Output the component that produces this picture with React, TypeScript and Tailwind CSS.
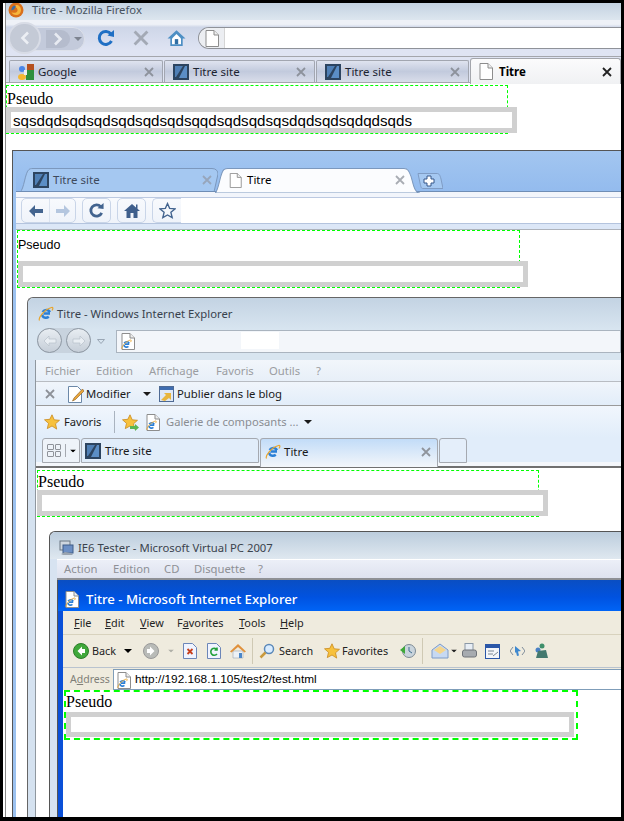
import React from "react";

const sans = "font-['Noto_Sans','Open_Sans',sans-serif]";

// small drawings used in the browser chromes
const PageIcon = ({ className = "w-[14px] h-[17px]" }: { className?: string }) => (
  <svg viewBox="0 0 14 17" className={`shrink-0 ${className}`}>
    <path d="M1 .5h8l4.5 4.5v11.5H1z" fill="#fff" stroke="#8d8d8d" />
    <path d="M9 .5V5h4.5" fill="#eee" stroke="#8d8d8d" />
  </svg>
);

const SiteIcon = () => (
  <svg viewBox="0 0 16 16" className="w-4 h-4 shrink-0">
    <rect width="16" height="16" fill="#2c4460" />
    <path d="M2 2h8L3 13H2z" fill="#4f7fb5" />
    <path d="M12 2h2v12H6z" fill="#5b8ec6" />
  </svg>
);

const GoogleIcon = () => (
  <svg viewBox="0 0 16 16" className="w-4 h-4 shrink-0">
    <rect x="9" width="7" height="7" fill="#b5501f" />
    <rect x="8" y="6" width="8" height="10" fill="#2f8f3c" />
    <circle cx="4" cy="5" r="3" fill="#4a86e8" />
    <ellipse cx="4" cy="13" rx="4" ry="3" fill="#f4b731" />
    <rect x="6" y="6" width="3" height="5" fill="#eee" />
  </svg>
);

const IeIcon = ({ className = "w-4 h-4" }: { className?: string }) => (
  <svg viewBox="0 0 16 16" className={`shrink-0 ${className}`}>
    <path d="M12 7.5H5.5M4.2 8.6c.2 3 4 4.2 6.6 2.1M11.8 6.2C11 3.6 6.6 3 4.6 6" fill="none" stroke="#2a7fd6" strokeWidth="2.4" />
    <path d="M1.5 14.5C0 12 6 3.500 13.5 1.500c2-.5 1.500 1.500.5 3" fill="none" stroke="#e9a52c" strokeWidth="1.200" />
  </svg>
);

const IeDoc = () => (
  <div className="relative w-[14px] h-[17px] shrink-0">
    <PageIcon />
    <div className="absolute left-0 bottom-0">
      <IeIcon className="w-[11px] h-[11px]" />
    </div>
  </div>
);

const FoxIcon = () => (
  <svg viewBox="0 0 16 16" className="w-4 h-4 shrink-0">
    <circle cx="8" cy="8" r="7.500" fill="#d9701c" />
    <path d="M8 3c3 0 5 2 5 5s-2 5-5 5c-2 0-4-1-4.500-3 2 1.500 5 1 6-1 .5-2-1-4-3-4z" fill="#f6b53c" />
    <path d="M6 3.500c-2 1-3 3-2.500 5L6 7.500l2-3z" fill="#3c6ea8" />
  </svg>
);

const Star = ({ className = "w-4 h-4" }: { className?: string }) => (
  <svg viewBox="0 0 16 16" className={`shrink-0 ${className}`}>
    <path d="M8 .8l2.200 5 5.300.5-4 3.500 1.200 5.300L8 12l-4.700 2.600 1.200-5.300-4-3.500 5.300-.5z" fill="#f7c13d" stroke="#c98a1e" strokeWidth=".8" />
  </svg>
);

const Cross = ({ className, size = 10 }: { className: string; size?: number }) => (
  <svg viewBox="0 0 10 10" width={size} height={size} className={`shrink-0 ${className}`}>
    <path d="M1 1l8 8M9 1L1 9" fill="none" stroke="currentColor" strokeWidth="1.800" />
  </svg>
);

const Caret = ({ className = "text-black" }: { className?: string }) => (
  <svg viewBox="0 0 8 4" className={`w-2 h-1 shrink-0 ${className}`}>
    <path d="M0 0h8L4 4z" fill="currentColor" />
  </svg>
);

const RoundArrow = ({ fill, dark, dir = "left" }: { fill: string; dark: string; dir?: "left" | "right" }) => (
  <svg viewBox="0 0 16 16" className="w-4 h-4 shrink-0">
    <circle cx="8" cy="8" r="7.500" fill={fill} stroke={dark} />
    <path d={dir === "left" ? "M9 3.500L4.500 8 9 12.500V10h3V6H9z" : "M7 3.500L11.500 8 7 12.500V10H4V6h3z"} fill="#fff" />
  </svg>
);

const XpDoc = ({ kind }: { kind: "stop" | "refresh" }) => (
  <svg viewBox="0 0 14 16" className="w-[14px] h-4 shrink-0">
    <path d="M.5.500h9l4 4v11H.5z" fill="#f0f4ff" stroke="#6c86b8" />
    {kind === "stop" ? (
      <path d="M4.500 6l5 5M9.500 6l-5 5" stroke="#c8401c" strokeWidth="1.800" />
    ) : (
      <path d="M10 6.500A3.500 3.500 0 1 0 10 11M10 4.500V7H7.500" fill="none" stroke="#23a03c" strokeWidth="1.600" />
    )}
  </svg>
);

const House = ({ className = "w-4 h-4" }: { className?: string }) => (
  <svg viewBox="0 0 16 16" className={`shrink-0 ${className}`}>
    <path d="M8 1L0 8.500h2.500V15h11V8.500H16z" fill="#4d8fc4" />
    <path d="M4 8.500L8 4.500l4 4V13.500H4z" fill="#fff" />
    <rect x="6.500" y="9" width="3" height="4.500" fill="#2f6da3" />
  </svg>
);

const XpHouse = () => (
  <svg viewBox="0 0 16 16" className="ml-[9px] h-4 w-4 shrink-0">
    <path d="M3 8h10v7H3z" fill="#eef2f6" stroke="#9aa6b2" strokeWidth=".6" />
    <path d="M8 1L0 8.500l1.500 1L8 4l6.500 5.500 1.500-1z" fill="#e0913c" />
    <rect x="9" y="10" width="3" height="5" fill="#4a86c8" />
  </svg>
);

type BoxProps = {
  box: string;
  label: string;
  input: string;
  value?: string;
};

// the page under test: same form rendered by each browser
const FormBox = ({ box, label, input, value = "" }: BoxProps) => (
  <div className={box}>
    <div className={label}>Pseudo</div>
    <input
      readOnly
      value={value}
      className={`relative block border-[5px] border-[#d0d0d0] bg-white px-[2px] text-black outline-none ${input}`}
    />
  </div>
);

const Firefox = () => (
  <div className="flex h-full flex-col border-l border-[#8a8a8a] bg-white">
    <div className="flex h-[17px] shrink-0 items-center overflow-hidden bg-gradient-to-b from-[#c3d2e1] to-[#dde6ef] pl-[2px]">
      <div className="-mt-[3px]">
        <FoxIcon />
      </div>
      <span className="mb-[3px] ml-2 text-[11.300px] leading-none text-[#47525e]">Titre - Mozilla Firefox</span>
    </div>
    <div className="flex h-[36px] shrink-0 items-center bg-gradient-to-b from-[#eef1f7] from-[12%] via-[#ced6e8] via-[20%] to-[#dfe4f3] to-[85%]">
      <div className="relative ml-[2px] flex h-[32px] w-[77px] items-center">
        <div className="absolute left-[6px] top-[5px] h-[24px] w-[71px] rounded-full border border-[#dde1ea] bg-[#c3cadb]" />
        <div className="absolute right-[15px] top-[8px] h-[18px] w-[24px] rounded-r-[9px] bg-[#b5bccd]" />
        <div className="absolute right-[3px] top-[15px]">
          <Caret className="text-[#7d8390]" />
        </div>
        <svg viewBox="0 0 10 14" className="absolute left-[45px] top-[10px] h-[14px] w-[10px]">
          <path d="M2 1.500L7.500 7 2 12.500" fill="none" stroke="#e8ebf2" strokeWidth="2.600" />
        </svg>
        <div className="relative flex h-[32px] w-[33px] items-center justify-center rounded-full border-2 border-[#d8dce6] bg-[#c4cad6]">
          <svg viewBox="0 0 10 14" className="h-[14px] w-[10px]">
            <path d="M8 1.500L2.500 7 8 12.500" fill="none" stroke="#eceff4" strokeWidth="2.600" />
          </svg>
        </div>
      </div>
      <svg viewBox="0 0 18 18" className="ml-[12px] h-[18px] w-[18px] shrink-0">
        <path d="M14 5A6.500 6.500 0 1 0 14.500 12" fill="none" stroke="#1f6fc4" strokeWidth="3" />
        <path d="M10.500 6.500L17 1v7z" fill="#1f6fc4" />
      </svg>
      <Cross className="ml-[18px] text-[#a3a9b5]" size={16} />
      <House className="ml-[18px] h-[18px] w-[19px]" />
      <div className="ml-[12px] flex h-[22px] min-w-0 flex-1 items-center rounded-l-[11px] border-y border-l border-[#8f9299] bg-white">
        <div className="flex h-full w-[26px] items-center justify-center rounded-l-[11px] border-r border-[#d5d5d5] bg-[#eceef2]">
          <PageIcon />
        </div>
      </div>
    </div>
    <div className="relative z-10 flex h-[27px] shrink-0 items-end border-y border-[#a4a6ac] bg-[#dfe4f3] pl-[3px]">
      {[
        { name: "Google", icon: <GoogleIcon />, w: "w-[154px]" },
        { name: "Titre site", icon: <SiteIcon />, w: "w-[151px]" },
        { name: "Titre site", icon: <SiteIcon />, w: "w-[153px]" },
      ].map((t, i) => (
        <div
          key={i}
          className={`mr-[1px] flex h-[22px] ${t.w} items-center rounded-t-[2px] border-x border-t border-[#a2a6b0] bg-gradient-to-b from-[#dfe3ef] via-[#c2cadd] to-[#d9ddea] pl-[8px] pr-[8px] text-[11.500px] text-[#1c2330]`}
        >
          {t.icon}
          <span className="ml-[4px] flex-1">{t.name}</span>
          <Cross className="text-[#8d929c]" />
        </div>
      ))}
      <div className="relative -mb-[2px] flex h-[26px] flex-1 items-center rounded-t-[3px] border-x border-t border-[#a4a6ac] bg-gradient-to-b from-[#fbfbfc] to-[#f0f1f3] pl-[8px] pr-[8px] text-[11.500px] font-bold text-black">
        <PageIcon />
        <span className="ml-[6px] flex-1">Titre</span>
        <Cross className="text-[#222]" />
      </div>
    </div>
    <div className="flex min-h-0 flex-1 flex-col bg-white pt-[2px]">
      <FormBox
        box="h-[49px] w-[502px] shrink-0 border border-dashed border-[#00ff00]"
        label="h-[21px] font-['Liberation_Serif',serif] text-[16px] leading-[26px] text-black"
        input="-ml-px h-[26px] w-[511px] font-['Liberation_Sans',sans-serif] text-[15.150px] leading-none"
        value="sqsdqdsqdsqdsqdsqdsqdsqqdsqdsqdsqsdqdsqdsqdqdsqds"
      />
      <div className="ml-[6px] mt-[16px] min-h-0 flex-1">
        <Chrome />
      </div>
    </div>
  </div>
);

const Chrome = () => (
  <div className="flex h-full flex-col border-l border-t border-[#555] bg-[#9cc2f0] pl-[3px]">
    <div className="relative flex h-[41px] shrink-0 items-end bg-gradient-to-b from-[#a3c6f0] to-[#93bbee] pl-[4px]">
      <div className="relative flex h-[24px] w-[198px] items-center pl-[13px] pr-[6px] text-[11.500px] text-[#3e4a5c]">
        <svg viewBox="0 0 198 24" preserveAspectRatio="none" className="absolute inset-0 h-full w-full">
          <path d="M0 24C4 22 5 4 9 1.500 10 .7 11 .5 13 .5H192C196 .5 198 3 198 6L194 24z" fill="#a5c8f1" stroke="#7c98bd" />
        </svg>
        <div className="relative">
          <SiteIcon />
        </div>
        <span className="relative ml-[4px] flex-1">Titre site</span>
        <Cross className="relative text-[#97a6bb]" />
      </div>
      <div className="relative z-10 -ml-[3px] flex h-[24px] w-[205px] items-center pl-[14px] pr-[15px] text-[11.500px] text-black">
        <svg viewBox="0 0 205 24" preserveAspectRatio="none" className="absolute inset-0 h-[25px] w-full">
          <path d="M0 24C4 22 5 4 9 1.500 10 .7 11 .5 13 .5H189C193 .5 194 3 196 8 198 14 199 24 205 24z" fill="#fbfcfe" stroke="#7c98bd" />
        </svg>
        <div className="relative">
          <PageIcon className="h-[15px] w-[13px]" />
        </div>
        <span className="relative ml-[5px] flex-1">Titre</span>
        <Cross className="relative text-[#a8acb3]" />
      </div>
      <svg viewBox="0 0 26 16" className="-ml-[3px] mb-[3px] h-4 w-[26px] shrink-0">
        <path d="M1 .5H20C22 .5 23 2 24 6L26 15.500H6C4 15.500 4 14 3 10z" fill="#a5c8f1" stroke="#7f9cc4" />
        <path d="M10 3h4v3h3v4h-3v3h-4v-3H7V6h3z" fill="#fff" stroke="#35568a" />
      </svg>
      <div className="absolute inset-x-0 bottom-0 h-px bg-[#6f8db5]" />
    </div>
    <div className="h-[6px] shrink-0 border-b border-[#bcc9e1] bg-[#f2f5fb]" />
    <div className="flex h-[26px] shrink-0 items-stretch border-b border-[#b4c4de] bg-gradient-to-b from-[#f8fafd] to-[#eff3fa] pl-[5px]">
      <div className="flex w-[55px] items-center rounded-[5px] border border-[#c9d5e8]">
        <svg viewBox="0 0 16 14" className="ml-[6px] h-[14px] w-4"><path d="M7 1L1 7l6 6V9h8V5H7z" fill="#43648f" /></svg>
        <div className="ml-[5px] h-full w-px bg-[#dbe3ef]" />
        <svg viewBox="0 0 16 14" className="ml-[5px] h-[14px] w-4"><path d="M9 1l6 6-6 6V9H1V5h8z" fill="#b4c6df" /></svg>
      </div>
      <div className="ml-[6px] flex w-[29px] items-center justify-center rounded-[5px] border border-[#c9d5e8]">
        <svg viewBox="0 0 18 18" className="h-[17px] w-[17px]">
          <path d="M13.500 5A6 6 0 1 0 14.500 11.500" fill="none" stroke="#43648f" strokeWidth="3" />
          <path d="M10 6.500L16.500 1v6.500z" fill="#43648f" />
        </svg>
      </div>
      <div className="ml-[6px] flex w-[29px] items-center justify-center rounded-[5px] border border-[#c9d5e8]">
        <svg viewBox="0 0 16 16" className="h-4 w-4"><path d="M8 1L0 8h2.500v7H6.500v-5h3v5h4V8H16l-2.500-2.200V1.500H12v3z" fill="#3f5f8c" /></svg>
      </div>
      <div className="ml-[6px] flex min-w-0 flex-1">
        <div className="flex w-[29px] items-center justify-center rounded-l-[5px] border-y border-l border-[#c9d5e8]">
          <svg viewBox="0 0 16 16" className="h-[17px] w-[17px]">
            <path d="M8 1.500l2 4.500 5 .5-3.800 3.200 1.200 5L8 12.200l-4.400 2.500 1.200-5L1 6.500 6 6z" fill="#f4f7fb" stroke="#43648f" strokeWidth="1.300" />
          </svg>
        </div>
        <div className="flex-1 bg-white" />
      </div>
    </div>
    <div className="h-[6px] shrink-0 border-b border-[#aeb3bb] bg-[#dce7f7]" />
    <div className="min-h-0 flex-1 bg-white pl-px">
      <FormBox
        box="h-[58px] w-[503px] shrink-0 border border-dashed border-[#00ff00]"
        label="h-[30px] font-['Liberation_Sans',sans-serif] text-[12.500px] leading-[28px] text-black"
        input="ml-0 h-[26px] w-[510px]"
      />
      <div className="ml-[10px] mt-[9px] h-[600px]">
        <InternetExplorer />
      </div>
    </div>
  </div>
);

const InternetExplorer = () => (
  <div className="flex h-full flex-col rounded-tl-[6px] border-l border-t border-[#666] bg-[#d5e2f0]">
    <div className="flex h-[32px] shrink-0 items-center rounded-tl-[6px] bg-gradient-to-b from-[#c3d3e3] to-[#d8e5f0] pl-[10px] text-[11.300px] text-[#38424d]">
      <IeIcon />
      <span className="ml-[3px]">Titre - Windows Internet Explorer</span>
    </div>
    <div className="relative flex h-[30px] shrink-0 items-start bg-[#d8e5f0] pl-[9px]">
      <div className="-mt-[2px] flex h-[25px] items-center rounded-full bg-[#c8d3de]">
        {[0, 1].map((k) => (
          <div key={k} className={`flex h-[25px] w-[25px] items-center justify-center rounded-full border border-[#8d97a2] bg-gradient-to-b from-[#e8edf2] to-[#c5ced8] ${k ? "ml-[4px]" : ""}`}>
            <svg viewBox="0 0 14 12" className="h-3 w-[14px]">
              <path d={k ? "M8 1l5 5-5 5V8H1V4h7z" : "M6 1L1 6l5 5V8h7V4H6z"} fill="#e9eef3" stroke="#b7c0ca" strokeWidth=".7" />
            </svg>
          </div>
        ))}
      </div>
      <svg viewBox="0 0 8 5" className="ml-[6px] mt-[9px] h-[5px] w-2 shrink-0"><path d="M.5.500h7L4 4.500z" fill="none" stroke="#9aa7b5" /></svg>
      <div className="relative ml-[11px] flex h-[23px] flex-1 items-center border border-[#aab4bf] bg-[#f3f6fa] pl-[4px]">
        <IeDoc />
        <div className="absolute left-[124px] top-[1px] h-[17px] w-[38px] bg-white" />
      </div>
    </div>
    <div className="ml-[7px] flex min-h-0 flex-1 flex-col border-l border-[#8f979f] bg-white">
      <div className="flex h-[22px] shrink-0 items-center border-b border-[#b8bcc2] bg-gradient-to-b from-[#f2f6fb] to-[#e7eff8] pl-[9px] pt-[2px] text-[11.300px] text-[#9b9da1]">
        <span className="w-[51px]">Fichier</span>
        <span className="w-[53px]">Edition</span>
        <span className="w-[67px]">Affichage</span>
        <span className="w-[53px]">Favoris</span>
        <span className="w-[47px]">Outils</span>
        <span>?</span>
      </div>
      <div className="flex h-[24px] shrink-0 items-center border-b border-[#9a9a9a] bg-gradient-to-b from-[#f0f5fb] to-[#e2edf9] pl-[9px] pt-[1px] text-[11.300px] text-[#1a1a1a]">
        <Cross className="text-[#8d9198]" />
        <svg viewBox="0 0 16 17" className="ml-[13px] h-[17px] w-4 shrink-0">
          <path d="M.5.500h9l4 4v12H.5z" fill="#fff" stroke="#6b88a8" />
          <path d="M14.500 3L6 12l-1.500 3 3-1.500L16 5z" fill="#e9a63a" stroke="#8a5a1c" strokeWidth=".6" />
        </svg>
        <span className="ml-[2px] w-[45px]">Modifier</span>
        <Caret className="ml-[12px]" />
        <svg viewBox="0 0 15 16" className="ml-[8px] h-4 w-[15px] shrink-0">
          <rect x=".5" y=".5" width="14" height="15" fill="#dfe8f5" stroke="#4e6a94" />
          <rect x="1" y="1" width="13" height="3" fill="#3f6db0" />
          <path d="M2 14l5-5-2-2h7v7l-2-2-4 3z" fill="#e8b53c" />
        </svg>
        <span className="ml-[3px]">Publier dans le blog</span>
      </div>
      <div className="flex h-[32px] shrink-0 items-center bg-gradient-to-b from-[#f1f6fd] to-[#e1edfa] pl-[8px] text-[11.200px] text-[#1a1a1a]">
        <Star />
        <span className="ml-[4px] w-[37px]">Favoris</span>
        <div className="ml-[13px] h-[22px] w-px bg-[#a9b3bf]" />
        <div className="relative ml-[7px]">
          <Star />
          <svg viewBox="0 0 9 7" className="absolute -bottom-[1px] -right-[1px] h-[7px] w-[9px]"><path d="M0 2h5V0l4 3.500L5 7V5H0z" fill="#5ab552" /></svg>
        </div>
        <div className="ml-[8px]">
          <IeDoc />
        </div>
        <span className="ml-[6px] text-[#8a8d92]">Galerie de composants ...</span>
        <Caret className="ml-[5px]" />
      </div>
      <div className="flex h-[30px] shrink-0 items-end border-b-[2px] border-[#707070] bg-[#e1edfa] pl-[6px] shadow-[inset_0_-4px_0_#f4f7fb]">
        <div className="mb-[3px] flex h-[25px] w-[38px] items-center rounded-t-[3px] border border-[#a5a9b0] bg-[#eef3f9]">
          <div className="grid w-[23px] grid-cols-2 gap-px border-r border-[#a5a9b0] px-[4px]">
            {[0, 1, 2, 3].map((k) => (
              <div key={k} className="h-[6px] rounded-[1px] border border-[#8f939a]" />
            ))}
          </div>
          <Caret className="ml-[3px] scale-75" />
        </div>
        <div className="mb-[3px] ml-px flex h-[25px] w-[178px] items-center rounded-t-[3px] border border-[#a5a9b0] bg-[#e1edfa] pl-[3px] text-[11.500px] text-[#1a1a1a]">
          <SiteIcon />
          <span className="ml-[4px]">Titre site</span>
        </div>
        <div className="relative -mb-[1px] ml-px flex h-[29px] w-[178px] items-center rounded-t-[3px] border-x border-t border-[#a5a9b0] bg-gradient-to-b from-[#c2dcf8] to-[#f3f6fa] pb-[3px] pl-[4px] pr-[6px] text-[11.500px] text-[#1a1a1a]">
          <IeIcon />
          <span className="ml-[3px] flex-1">Titre</span>
          <Cross className="text-[#8f949c]" />
        </div>
        <div className="mb-[3px] ml-px h-[25px] w-[28px] rounded-t-[3px] border border-[#a5a9b0] bg-[#e4eefa]" />
      </div>
      <div className="min-h-0 flex-1 bg-white pl-px">
        <FormBox
          box="mt-[2px] h-[47px] w-[502px] shrink-0 border border-dashed border-[#00ff00]"
          label="h-[19px] font-['Liberation_Serif',serif] text-[16px] leading-[21px] text-black"
          input="-ml-px h-[26px] w-[511px]"
        />
        <div className="ml-[12px] mt-[14px] h-[400px]">
          <VirtualPc />
        </div>
      </div>
    </div>
  </div>
);

const VirtualPc = () => (
  <div className="flex h-full flex-col rounded-tl-[6px] border-l border-t border-[#555] bg-[#d7e3f1]">
    <div className="flex h-[27px] shrink-0 items-center rounded-tl-[6px] bg-gradient-to-b from-[#bccddd] to-[#dfe8f0] pl-[9px] pt-[5px] text-[11.300px] text-[#3b434d]">
      <svg viewBox="0 0 16 16" className="h-4 w-4 shrink-0">
        <rect x="1" y="1" width="10" height="9" fill="#cfd6de" stroke="#6b7682" />
        <rect x="4" y="5" width="10" height="8" fill="#6c8fc4" stroke="#3e5c88" />
        <path d="M2 14l4-2 6 1 2 2H4z" fill="#9aa4b0" />
      </svg>
      <span className="ml-[3px]">IE6 Tester - Microsoft Virtual PC 2007</span>
    </div>
    <div className="ml-[7px] flex h-[21px] shrink-0 items-center border-b-[2px] border-t border-b-[#8e9095] border-t-white bg-gradient-to-b from-[#eceff8] to-[#dee2ef] pl-[7px] text-[11.300px] text-[#8e9096]">
      <span className="w-[49px]">Action</span>
      <span className="w-[51px]">Edition</span>
      <span className="w-[30px]">CD</span>
      <span className="w-[64px]">Disquette</span>
      <span>?</span>
    </div>
    <div className="ml-[7px] flex min-h-0 flex-1 flex-col border-l border-[#555] bg-[#0a50d8]">
      <div className="flex h-[31px] shrink-0 items-center bg-gradient-to-b from-[#0a4ec2] via-[#0052e0] via-[55%] to-[#0064f6] pl-[7px] pt-[8px] text-[13.200px] font-medium text-white">
        <IeDoc />
        <span className="ml-[7px]">Titre - Microsoft Internet Explorer</span>
      </div>
      <div className="ml-[5px] flex min-h-0 flex-1 flex-col bg-white">
        <div className="flex h-[24px] shrink-0 items-center border-b border-[#d8d2bd] bg-[#efebde] pl-[11px] pt-[2px] text-[10.900px] text-[#222]">
          <span className="w-[31px]"><u>F</u>ile</span>
          <span className="w-[35px]"><u>E</u>dit</span>
          <span className="w-[37px]"><u>V</u>iew</span>
          <span className="w-[62px]">F<u>a</u>vorites</span>
          <span className="w-[41px]"><u>T</u>ools</span>
          <span><u>H</u>elp</span>
        </div>
        <div className="flex h-[32px] shrink-0 items-center bg-[#efebde] pl-[10px] text-[10.800px] text-[#222]">
          <RoundArrow fill="#3fa83a" dark="#2c7d2a" />
          <span className="ml-[3px] w-[32px]">Back</span>
          <Caret />
          <div className="ml-[11px]">
            <RoundArrow fill="#b9bbb8" dark="#999" dir="right" />
          </div>
          <Caret className="ml-[8px] scale-75 text-[#b0b0a8]" />
          <div className="ml-[8px]"><XpDoc kind="stop" /></div>
          <div className="ml-[10px]"><XpDoc kind="refresh" /></div>
          <XpHouse />
          <div className="ml-[6px] h-[26px] w-px bg-[#cfc9b4]" />
          <svg viewBox="0 0 16 16" className="ml-[6px] h-4 w-4 shrink-0">
            <circle cx="10" cy="6" r="4.500" fill="#d9ecff" stroke="#5b88b8" strokeWidth="1.500" />
            <path d="M6.500 9.500L1.500 14.500" stroke="#c99a3e" strokeWidth="2.500" />
          </svg>
          <span className="ml-[4px] w-[45px]">Search</span>
          <Star />
          <span className="ml-[2px] w-[58px]">Favorites</span>
          <svg viewBox="0 0 16 16" className="h-4 w-4 shrink-0">
            <circle cx="9" cy="8" r="6.500" fill="#c9d4dc" stroke="#7d8a94" />
            <path d="M9 4v4l3 2" fill="none" stroke="#3e6c8f" />
            <path d="M0 7l5-4v8z" fill="#3fa83a" />
          </svg>
          <div className="ml-[6px] h-[26px] w-px bg-[#cfc9b4]" />
          <svg viewBox="0 0 18 16" className="ml-[8px] h-4 w-[18px] shrink-0">
            <path d="M1 7l8-6 8 6v8H1z" fill="#c7d9f2" stroke="#7d9bc8" />
            <path d="M3 7l6-4 6 4-6 4z" fill="#f5d58c" />
          </svg>
          <Caret className="ml-px scale-75" />
          <svg viewBox="0 0 15 16" className="ml-[4px] h-4 w-[15px] shrink-0">
            <rect x="3" y="0.500" width="8" height="7" fill="#e8eef5" stroke="#8b98a6" />
            <rect x="0.500" y="7" width="14" height="7" rx="2" fill="#a7abb0" stroke="#6f7379" />
          </svg>
          <svg viewBox="0 0 15 15" className="ml-[8px] h-[15px] w-[15px] shrink-0">
            <rect x=".5" y=".5" width="14" height="14" fill="#f4f6fa" stroke="#2b57a8" />
            <rect x="1" y="1" width="13" height="3" fill="#2b57a8" />
            <path d="M3 7h6M3 10h5M8 12l5-4" stroke="#7b8794" />
          </svg>
          <svg viewBox="0 0 15 12" className="ml-[10px] h-3 w-[15px] shrink-0">
            <path d="M3 2L0 6l3 4M12 2l3 4-3 4" fill="none" stroke="#7f8c9a" />
            <path d="M5 1l6 5-3 .5 1 4-2 .5-1-4-1 1z" fill="#3e88cf" />
          </svg>
          <svg viewBox="0 0 15 16" className="ml-[8px] h-4 w-[15px] shrink-0">
            <circle cx="9" cy="3" r="2.500" fill="#3f8f6b" />
            <circle cx="5" cy="7" r="2.500" fill="#4a80c4" />
            <path d="M5 8l8-1 2 8H3z" fill="#44796f" />
          </svg>
        </div>
        <div className="flex h-[23px] shrink-0 items-stretch border-t border-[#b9c3cf] bg-[#efebde] pl-[7px] pt-[1px] text-[10.500px] text-[#7f7f78]">
          <span className="flex w-[43px] items-center">A<u>d</u>dress</span>
          <div className="flex flex-1 items-center border-y border-l border-[#7f9db9] bg-white pl-[3px] pt-[1px] font-['Liberation_Sans',sans-serif] text-[11.800px] text-black">
            <IeDoc />
            <span className="ml-[4px]">http://192.168.1.105/test2/test.html</span>
          </div>
        </div>
        <div className="min-h-0 flex-1 bg-white">
          <FormBox
            box="ml-px h-[50px] w-[514px] border-[2px] border-dashed border-[#00ff00]"
            label="h-[20px] font-['Liberation_Serif',serif] text-[16px] leading-[20px] text-black"
            input="h-[25px] w-[508px]"
          />
        </div>
      </div>
    </div>
  </div>
);

export default function App() {
  return (
    <div className={`h-[821px] w-[624px] overflow-hidden bg-black pb-[4px] pl-[3px] pr-[3px] pt-[3px] ${sans}`}>
      <div className="h-full overflow-hidden bg-white pl-[2px]">
        <Firefox />
      </div>
    </div>
  );
}
